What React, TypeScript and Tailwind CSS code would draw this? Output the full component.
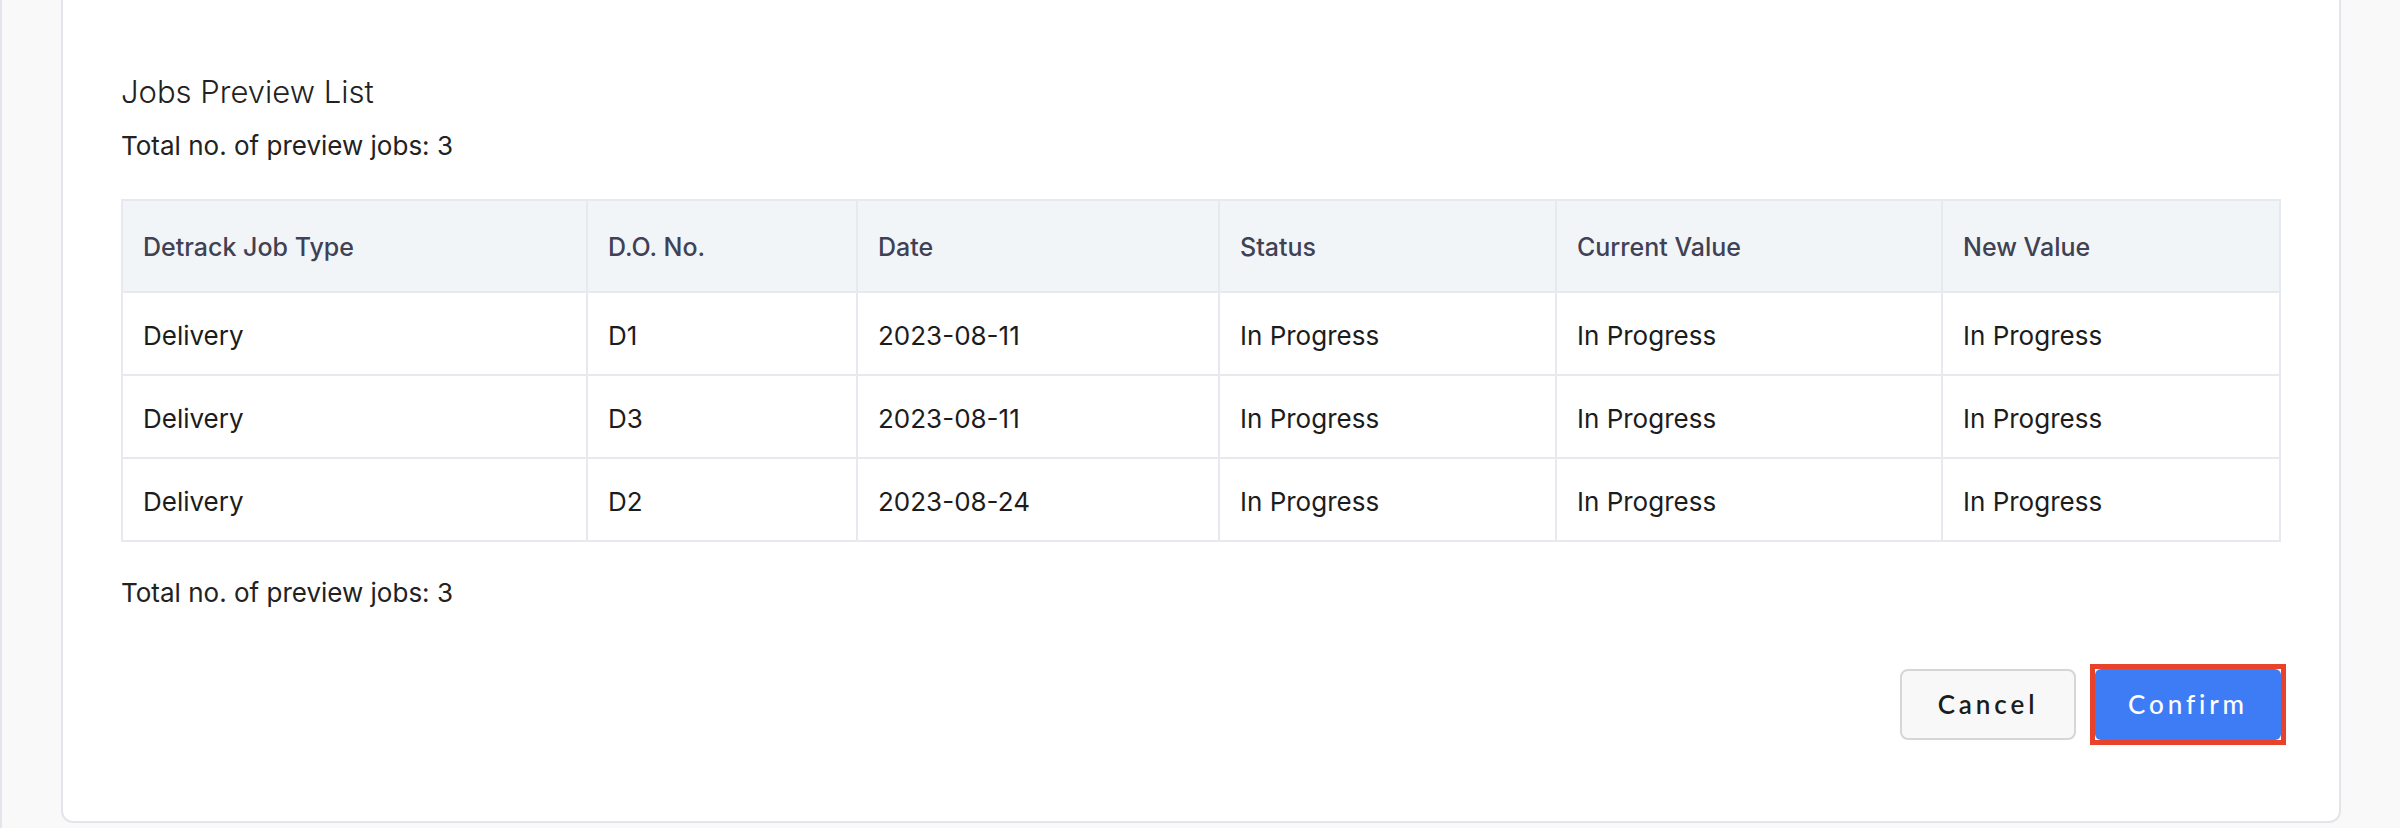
const columns = [
  { label: "Detrack Job Type", width: "w-[465px]" },
  { label: "D.O. No.", width: "w-[270px]" },
  { label: "Date", width: "w-[362px]" },
  { label: "Status", width: "w-[337px]" },
  { label: "Current Value", width: "w-[386px]" },
  { label: "New Value", width: "w-[338px]" },
];

const jobs = [
  { type: "Delivery", doNo: "D1", date: "2023-08-11", status: "In Progress", current: "In Progress", next: "In Progress" },
  { type: "Delivery", doNo: "D3", date: "2023-08-11", status: "In Progress", current: "In Progress", next: "In Progress" },
  { type: "Delivery", doNo: "D2", date: "2023-08-24", status: "In Progress", current: "In Progress", next: "In Progress" },
];

export default function App() {
  return (
    <div className="h-[828px] border-l-2 border-[#e4e5ea] bg-[#f9f9f9] px-[59px] font-['Inter',sans-serif] text-[#1c1c1c]">
      <div className="rounded-b-xl border-x-2 border-b-2 border-[#e4e5ea] bg-white px-[58px] pt-[70px] pb-[76px]">
        <h2 className="text-[31px] leading-[44px] font-light text-[#222]">Jobs Preview List</h2>
        <p className="mt-[14px] text-[26px] leading-[36px] text-[#222]">
          Total no. of preview jobs: {jobs.length}
        </p>

        <table className="mt-[35px] w-full table-fixed border-collapse text-left">
          <colgroup>
            {columns.map((c) => (
              <col key={c.label} className={c.width} />
            ))}
          </colgroup>
          <thead>
            <tr className="bg-[#f2f5f8]">
              {columns.map((c) => (
                <th
                  key={c.label}
                  className="h-[92px] border-2 border-[#e8e9ee] px-[20px] pt-[4px] text-[25px] font-medium text-[#3f4254]"
                >
                  {c.label}
                </th>
              ))}
            </tr>
          </thead>
          <tbody>
            {jobs.map((job) => (
              <tr key={job.doNo}>
                {[job.type, job.doNo, job.date, job.status, job.current, job.next].map((v, i) => (
                  <td
                    key={i}
                    className="h-[83px] border-2 border-[#e8e9ee] px-[20px] pt-[3px] text-[26px] text-[#1c1c1c]"
                  >
                    {v}
                  </td>
                ))}
              </tr>
            ))}
          </tbody>
        </table>

        <p className="mt-[33px] text-[26px] leading-[36px] text-[#222]">
          Total no. of preview jobs: {jobs.length}
        </p>

        <div className="mt-[53px] flex items-center justify-end gap-[14px] font-['Lato',sans-serif]">
          <button
            type="button"
            className="h-[71px] w-[176px] rounded-lg border-2 border-[#d6d6da] bg-[#f8f8f8] text-[26px] font-semibold tracking-[0.15em] text-[#1c1c1c]"
          >
            Cancel
          </button>
          <span className="-mr-[5px] flex border-[5px] border-[#e8432a] bg-white">
            <button
              type="button"
              className="h-[71px] w-[186px] rounded-md bg-[#3e7cf6] text-[26px] font-medium tracking-[0.15em] text-white"
            >
              Confirm
            </button>
          </span>
        </div>
      </div>
    </div>
  );
}
